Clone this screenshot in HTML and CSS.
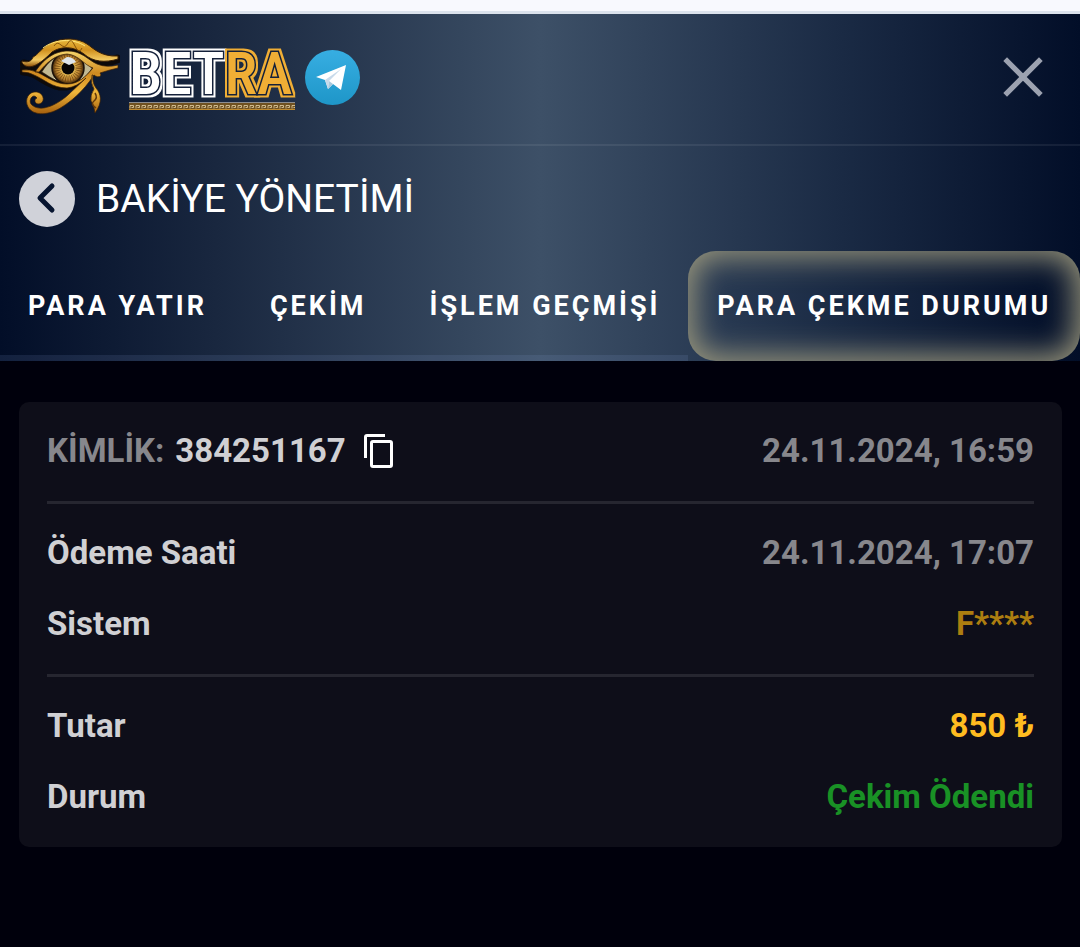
FILE: index.html
```html
<!DOCTYPE html>
<html lang="tr">
<head>
<meta charset="utf-8">
<meta name="viewport" content="width=device-width, initial-scale=1">
<title>Bakiye Yönetimi</title>
<link rel="stylesheet" href="styles.css">
</head>
<body>
<div class="strip"></div>
<header class="header">
  <div class="topbar">
    <a class="brand" href="#" aria-label="Betra">
      <svg class="eye" viewBox="0 0 100 80" aria-hidden="true">
        <defs>
          <linearGradient id="gold" x1="0" y1="0" x2="0" y2="1"><stop offset="0" stop-color="#e9b93c"/><stop offset=".4" stop-color="#d1911f"/><stop offset=".75" stop-color="#f3ca62"/><stop offset="1" stop-color="#8a4d08"/></linearGradient>
          <linearGradient id="goldlow" gradientUnits="userSpaceOnUse" x1="0" y1="14" x2="0" y2="77"><stop offset="0" stop-color="#f6d56a"/><stop offset=".35" stop-color="#d08a20"/><stop offset=".65" stop-color="#f0b73c"/><stop offset="1" stop-color="#a45e0c"/></linearGradient>
          <radialGradient id="iris"><stop offset=".35" stop-color="#f0c558"/><stop offset=".75" stop-color="#b47c2c"/><stop offset="1" stop-color="#2a1705"/></radialGradient>
          <filter id="ring-white" x="-10%" y="-10%" width="120%" height="120%" color-interpolation-filters="sRGB"><feMorphology in="SourceAlpha" operator="dilate" radius="2" result="wide"/><feFlood flood-color="#fff"/><feComposite in2="wide" operator="in" result="ring"/><feMerge><feMergeNode in="ring"/><feMergeNode in="SourceGraphic"/></feMerge></filter>
          <filter id="ring-gold" x="-10%" y="-10%" width="120%" height="120%" color-interpolation-filters="sRGB"><feMorphology in="SourceAlpha" operator="dilate" radius="2" result="wide"/><feFlood flood-color="#f0ae35"/><feComposite in2="wide" operator="in" result="ring"/><feMerge><feMergeNode in="ring"/><feMergeNode in="SourceGraphic"/></feMerge></filter>
        </defs>
        <path d="M4 27C14 31 22 24 30 16C42 7 58 8 66 18C76 26 88 26 97 22M3 34C18 34 22 45 40 49C60 50 66 36 77 31" fill="none" stroke="#0d0a0a" stroke-width="9" stroke-linecap="round"/>
        <path d="M21 35C30 20 39 17 48 17C61 17 68 27 73 31C67 41 58 47 47 47C36 46 29 40 21 35Z" fill="#f0ebc4" stroke="#160d05" stroke-width="2"/>
        <path d="M21 35Q28 24 36 20L34 43Q27 39 21 35M62 21L73 31L62 42Z" fill="#6d5c38" opacity=".35"/>
        <circle cx="48" cy="31" r="16" fill="url(#iris)" stroke="#1a1008" stroke-width="1.500"/>
        <circle cx="48" cy="31" r="11" fill="none" stroke="#6f460f" stroke-width="7" stroke-dasharray=".7 1.700"/>
        <circle cx="48" cy="31" r="6.500" fill="#070504"/>
        <path d="M41 24L47 20Q53 20 56 25L49 28Z" fill="#dfe5ea"/>
        <path d="M2 24C8 26 12 24 13 20C18 18 22 10 31 6C43 0 58 1 67 7C73 11 81 20 98 19L98 22C85 26 73 25 64 17C54 9 41 9 32 15C23 24 10 36 2 26Z" fill="url(#gold)" stroke="#3b2107"/>
        <path d="M23 11C35 2 53 1 65 9" fill="none" stroke="#ffe77d" stroke-width="1"/>
        <path d="M34 9Q37 4 41 8T48 6T55 9T62 11" fill="none" stroke="#895408" stroke-width="1"/>
        <path d="M15 35C26 19 36 15 46 14C61 13 68 23 77 27Q86 31 98 28L98 31Q89 33 80 36C83 40 77 41 74 38C63 55 50 65 42 70C30 78 14 80 8 70C4 62 9 54 17 55C25 57 25 66 19 67C14 67 14 62 17 61Q14 57 11 61Q8 67 15 70C24 74 38 67 48 58L66 41Q57 50 47 51C32 51 24 42 14 38Q9 35 2 35L2 33Q10 32 17 35C29 41 36 47 47 47C59 47 66 39 73 31C64 28 59 18 47 17C34 18 27 26 19 35Z" fill="url(#goldlow)" stroke="#3b2107" stroke-width=".7"/>
        <path d="M73 38Q72 46 76 51C81 57 83 65 75 76Q74 68 71 64Q70 58 74 52Q70 46 72 38Z" fill="url(#goldlow)" stroke="#3b2107" stroke-width=".7"/>
        <path d="M75 56Q78 61 74 64T76 71" fill="none" stroke="#62380a" stroke-width="1.500"/>
      </svg>
      <span class="wordmark">
        <span class="name"><span class="name-white">BET</span><span class="name-gold">RA</span></span>
        <svg class="meander" aria-hidden="true"><defs><pattern id="key" width="6" height="8" patternUnits="userSpaceOnUse"><rect width="6" height="8" fill="#6f5121"/><path d="M0 .5H6" stroke="#8d8e91" stroke-width="1"/><path d="M1 6.500V3.500H4.500V5.500H2.500" fill="none" stroke="#e6d3a8" stroke-width=".8"/><path d="M0 7.500H6" stroke="#c08a2d" stroke-width="1"/></pattern></defs><rect width="100%" height="8" fill="url(#key)"/></svg>
      </span>
    </a>
    <a class="telegram" href="#" aria-label="Telegram">
      <svg viewBox="0 0 55 55"><defs><linearGradient id="tg" x1="0" y1="0" x2="0" y2="1"><stop offset="0" stop-color="#37aee2"/><stop offset="1" stop-color="#1e96c8"/></linearGradient></defs><circle cx="27.500" cy="27.500" r="27.500" fill="url(#tg)"/><path d="M11 27L41 15L36 40L28 34L23 39L20 30Z" fill="#fff"/><path d="M20 30L36 19L24 31L23 39Z" fill="#c8daea"/><path d="M24 31L28 34L23 39Z" fill="#a9c9dd"/></svg>
    </a>
    <button class="close" type="button" aria-label="Kapat"><svg viewBox="0 0 40 40"><path d="M3 3L37 37M37 3L3 37" fill="none" stroke="#9ca2b0" stroke-width="5"/></svg></button>
  </div>
  <div class="heading">
    <button class="back" type="button" aria-label="Geri"><svg viewBox="0 0 56 56"><path d="M33 15L21 27L33 39" fill="none" stroke="#071530" stroke-width="5" stroke-linecap="round" stroke-linejoin="round"/></svg></button>
    <h1 class="title">BAKİYE YÖNETİMİ</h1>
  </div>
  <nav class="tabs">
    <button class="tab spaced" type="button">PARA YATIR</button>
    <button class="tab spaced" type="button">ÇEKİM</button>
    <button class="tab" type="button">İŞLEM GEÇMİŞİ</button>
    <button class="tab active" type="button" aria-current="page">PARA ÇEKME DURUMU</button>
  </nav>
</header>
<main class="content">
  <section class="card">
    <div class="row"><div class="ident"><span class="muted">KİMLİK:</span><span>384251167</span><button class="copy" type="button" aria-label="Kopyala"><svg viewBox="0 0 30 34"><path d="M1.500 24V3Q1.500 1.500 3 1.500H21" fill="none" stroke="#fff" stroke-width="3"/><rect x="7.500" y="7.500" width="20" height="25" rx="1.500" fill="none" stroke="#fff" stroke-width="3"/></svg></button></div><time class="muted">24.11.2024, 16:59</time></div>
    <hr class="rule">
    <div class="row"><span>Ödeme Saati</span><time class="muted">24.11.2024, 17:07</time></div>
    <div class="row"><span>Sistem</span><span class="system">F****</span></div>
    <hr class="rule">
    <div class="row"><span>Tutar</span><span class="amount">850 ₺</span></div>
    <div class="row"><span>Durum</span><span class="paid">Çekim Ödendi</span></div>
  </section>
</main>
</body>
</html>
```
FILE: styles.css
```css
* { box-sizing: border-box; }
body { margin: 0; background: #00000c; color: #d0d0d3; font-family: Roboto, "Liberation Sans", sans-serif; }
button { margin: 0; padding: 0; border: 0; background: none; color: inherit; font: inherit; cursor: pointer; }
svg { display: block; }
.strip { height: 14px; background: #f8f9fe; border-bottom: 3px solid #dbe2ec; }
.header { background: linear-gradient(90deg, #020e28 0%, #19273f 20%, #3d5067 50%, #1a2a44 78%, #020e28 100%); color: #fff; }
.topbar { display: flex; align-items: center; height: 132px; padding: 0 36px 4px 20px; border-bottom: 2px solid rgba(255, 255, 255, 0.07); }
.brand { display: flex; align-items: center; gap: 9px; color: #fff; text-decoration: none; }
.eye { width: 100px; height: 80px; }
.wordmark { display: flex; flex-direction: column; gap: 2px; width: 166px; padding-top: 3px; }
.name {
  display: flex;
  font: 500 60px/52px "Roboto Condensed", "Liberation Sans Narrow", Roboto, sans-serif;
  -webkit-text-stroke: 3px #14203a;
  paint-order: stroke fill;
}
.name-white { color: #fff; filter: url(#ring-white); }
.name-gold { color: #f0ae35; filter: url(#ring-gold); }
.meander { width: 100%; height: 8px; }
.telegram { margin-left: 10px; }
.telegram svg { width: 55px; height: 55px; }
.close { margin-left: auto; }
.close svg { width: 42px; height: 42px; }
.heading { display: flex; align-items: center; gap: 21px; padding: 25px 19px 24px; }
.back { border-radius: 50%; background: #d0d2d9; }
.back svg { width: 56px; height: 56px; }
.title { margin: 0; font-size: 39px; line-height: 56px; font-weight: 400; }
.tabs { display: flex; height: 110px; }
.tab { padding: 0 28px; box-shadow: inset 0 -6px rgba(150, 170, 230, 0.12); font-size: 27px; font-weight: 700; letter-spacing: 3px; white-space: nowrap; }
.spaced { padding-right: 35px; }
.active { flex: 1; border-radius: 28px; box-shadow: inset 0 0 30px 6px #99967c; }
.content { padding: 41px 18px 100px 19px; }
.card { display: flex; flex-direction: column; gap: 31px; padding: 29px 28px 30px; border-radius: 10px; background: #0e0e19; font-size: 33px; font-weight: 700; }
.row { display: flex; align-items: center; justify-content: space-between; height: 40px; line-height: 40px; }
.ident { display: flex; align-items: center; gap: 11px; }
.muted { color: #87878c; }
.copy { margin-left: 7px; }
.copy svg { width: 30px; height: 34px; }
.rule { width: 100%; height: 3px; margin: -1px 0 -2px; border: 0; background: #262630; }
.system { color: #ad7e10; }
.amount { color: #ffbc20; }
.paid { color: #199125; }
```
